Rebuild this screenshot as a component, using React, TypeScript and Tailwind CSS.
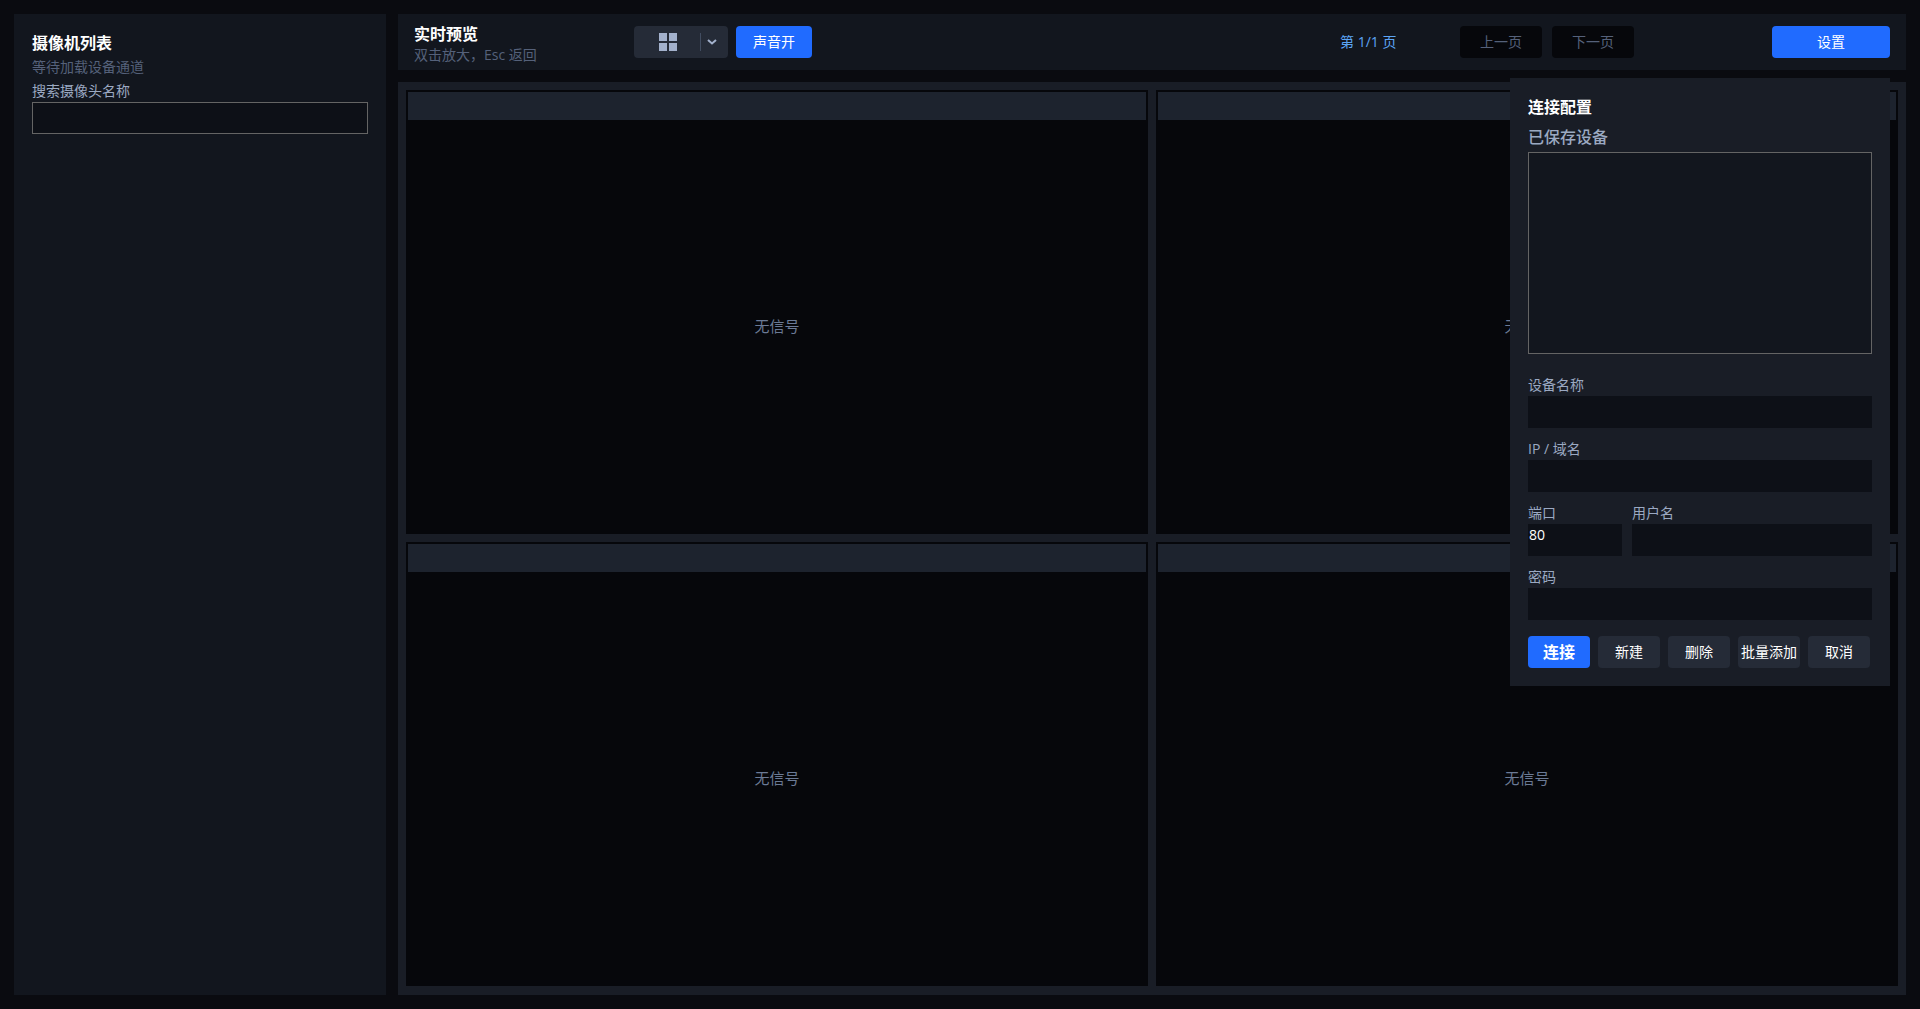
import React, { useState } from 'react';

interface FieldProps {
  id: string;
  label: string;
  type?: string;
  value: string;
  onChange: (value: string) => void;
}

const Field: React.FC<FieldProps> = ({ id, label, type = 'text', value, onChange }) => (
  <div>
    <label htmlFor={id} className="block text-sm leading-[22px] text-[#9ba9c2]">
      {label}
    </label>
    <input
      id={id}
      type={type}
      value={value}
      onChange={(e) => onChange(e.target.value)}
      className="block w-full h-8 px-px pb-3 bg-[#0d1017] text-sm text-white outline-none"
    />
  </div>
);

const VideoTile: React.FC = () => (
  <section className="flex flex-col min-h-60 p-0.5 bg-[#06070b]">
    <div className="h-7 bg-[#1d232e]" />
    <div className="flex-1 flex items-center justify-center text-[15px] text-[#6b7a96]">无信号</div>
  </section>
);

const LayoutIcon: React.FC = () => (
  <svg className="w-[18px] h-[18px]" viewBox="0 0 18 18" fill="#a3b1cc" aria-hidden="true">
    <rect x="0" y="0" width="8" height="8" />
    <rect x="10" y="0" width="8" height="8" />
    <rect x="0" y="10" width="8" height="8" />
    <rect x="10" y="10" width="8" height="8" />
  </svg>
);

const ChevronIcon: React.FC = () => (
  <svg className="w-2.5 h-1.5" viewBox="0 0 10 6" fill="none" stroke="#a3b1cc" strokeWidth="2" aria-hidden="true">
    <path d="M1 1l4 3.5L9 1" />
  </svg>
);

const Sidebar: React.FC = () => {
  const [keyword, setKeyword] = useState('');

  return (
    <aside className="w-[372px] shrink-0 p-[18px] bg-[#12161e]">
      <h2 className="text-base leading-[22px] font-bold text-white">摄像机列表</h2>
      <p className="mt-0.5 text-sm leading-[22px] text-[#55617a]">等待加载设备通道</p>
      <label htmlFor="search" className="block mt-0.5 text-sm leading-[22px] text-[#9ba9c2]">
        搜索摄像头名称
      </label>
      <input
        id="search"
        type="text"
        value={keyword}
        onChange={(e) => setKeyword(e.target.value)}
        className="block w-full h-8 px-1 bg-[#0d1017] border border-[#646464] text-sm text-white outline-none"
      />
    </aside>
  );
};

interface ToolbarProps {
  muted: boolean;
  onToggleSound: () => void;
  onSettings: () => void;
}

const Toolbar: React.FC<ToolbarProps> = ({ muted, onToggleSound, onSettings }) => (
  <header className="flex items-center h-14 px-4 bg-[#12161e]">
    <div className="w-[220px] shrink-0 pt-1">
      <h1 className="text-base leading-[22px] font-bold text-white">实时预览</h1>
      <p className="text-sm leading-5 text-[#55617a]">双击放大，Esc 返回</p>
    </div>

    {/* Layout + sound */}
    <div className="flex items-center gap-2 shrink-0">
      <button className="flex items-center w-[94px] h-8 rounded bg-[#252b37]" aria-label="画面布局">
        <span className="w-[66px] flex justify-center pl-0.5">
          <LayoutIcon />
        </span>
        <span className="w-px h-[18px] bg-[#424d61]" />
        <span className="pl-1.5">
          <ChevronIcon />
        </span>
      </button>
      <button onClick={onToggleSound} className="w-[76px] h-8 rounded bg-[#206bff] text-sm text-white">
        {muted ? '声音关' : '声音开'}
      </button>
    </div>

    {/* Paging */}
    <div className="flex items-center ml-auto shrink-0">
      <span className="w-[120px] text-sm text-[#5ca5f5]">第 1/1 页</span>
      <div className="flex gap-2.5">
        <button disabled className="w-[82px] h-8 rounded bg-[#06070b] text-sm text-[#55617a]">
          上一页
        </button>
        <button disabled className="w-[82px] h-8 rounded bg-[#06070b] text-sm text-[#55617a]">
          下一页
        </button>
      </div>
    </div>
    <button onClick={onSettings} className="w-[118px] h-8 ml-[138px] shrink-0 rounded bg-[#206bff] text-sm text-white">
      设置
    </button>
  </header>
);

const ACTIONS = ['新建', '删除', '批量添加', '取消'];

const ConnectionPanel: React.FC<{ onClose: () => void }> = ({ onClose }) => {
  const [form, setForm] = useState({ name: '', host: '', port: '80', user: '', password: '' });
  const set = (key: string) => (value: string) => setForm((prev) => ({ ...prev, [key]: value }));

  return (
    <form
      onSubmit={(e) => e.preventDefault()}
      className="absolute top-16 right-4 w-[380px] p-[18px] bg-[#191d26]"
    >
      <h2 className="text-base leading-[22px] font-bold text-white">连接配置</h2>
      <label htmlFor="devices" className="block mt-2 pb-1 text-base leading-[22px] font-medium text-[#9ba9c2]">
        已保存设备
      </label>
      <select
        id="devices"
        size={8}
        className="block w-full h-[202px] bg-[#12161e] border border-[#646464] text-sm text-white outline-none"
      />

      <div className="mt-5 flex flex-col gap-2.5">
        <Field id="name" label="设备名称" value={form.name} onChange={set('name')} />
        <Field id="host" label="IP / 域名" value={form.host} onChange={set('host')} />
        <div className="flex gap-2.5">
          <div className="w-[94px]">
            <Field id="port" label="端口" value={form.port} onChange={set('port')} />
          </div>
          <div className="flex-1">
            <Field id="user" label="用户名" value={form.user} onChange={set('user')} />
          </div>
        </div>
        <Field id="password" label="密码" type="password" value={form.password} onChange={set('password')} />
      </div>

      <div className="mt-4 flex gap-2">
        <button type="submit" className="w-[62px] h-8 rounded bg-[#206bff] text-base font-bold text-white">
          连接
        </button>
        {ACTIONS.map((label) => (
          <button
            key={label}
            type="button"
            onClick={label === '取消' ? onClose : undefined}
            className="w-[62px] h-8 rounded bg-[#252b37] text-sm text-white whitespace-nowrap"
          >
            {label}
          </button>
        ))}
      </div>
    </form>
  );
};

export default function App() {
  const [panelOpen, setPanelOpen] = useState(true);
  const [muted, setMuted] = useState(false);

  return (
    <div
      lang="zh-CN"
      className="flex gap-3 min-h-screen p-3.5 bg-[#0a0b10] font-['Open_Sans','Noto_Sans_CJK_SC',sans-serif]"
    >
      <Sidebar />
      <main className="relative flex-1 min-w-0 flex flex-col gap-3">
        <Toolbar
          muted={muted}
          onToggleSound={() => setMuted(!muted)}
          onSettings={() => setPanelOpen(!panelOpen)}
        />
        <div className="flex-1 grid grid-cols-2 auto-rows-fr gap-2 p-2 pb-[9px] bg-[#191d26]">
          <VideoTile />
          <VideoTile />
          <VideoTile />
          <VideoTile />
        </div>
        {panelOpen && <ConnectionPanel onClose={() => setPanelOpen(false)} />}
      </main>
    </div>
  );
}
